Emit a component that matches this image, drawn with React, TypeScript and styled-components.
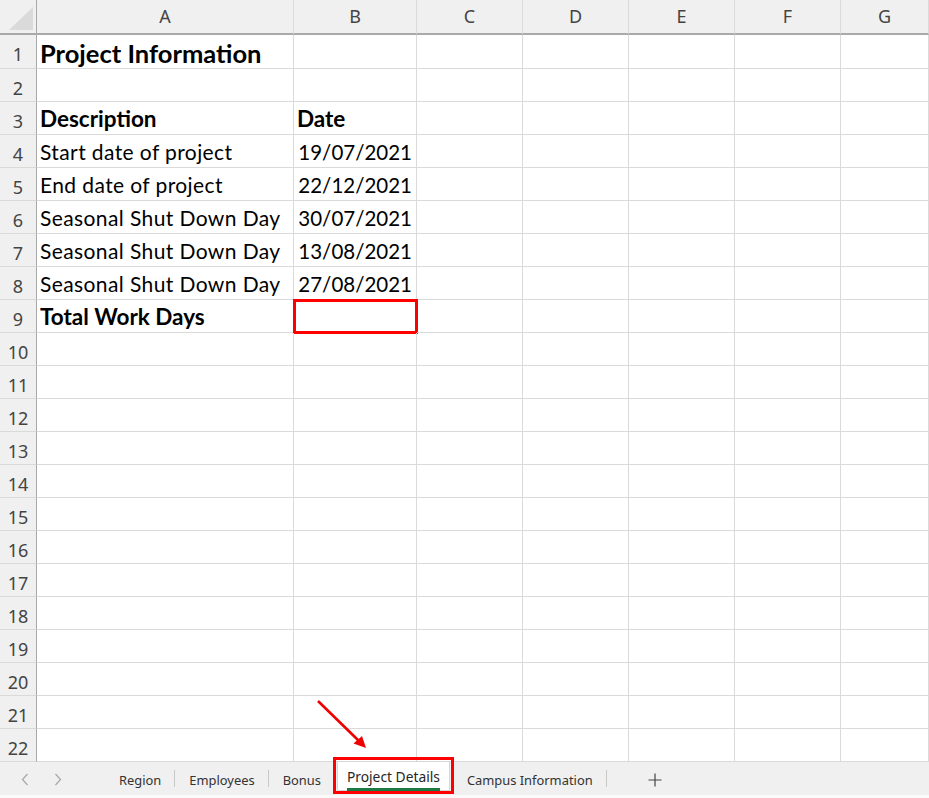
import React from "react";
import styled, { createGlobalStyle, css } from "styled-components";

const GlobalStyle = createGlobalStyle`
  html, body { margin: 0; padding: 0; background: #ffffff; }
  * { box-sizing: border-box; }
`;

const Page = styled.div`
  position: relative;
  width: 929px;
  height: 798px;
  overflow: hidden;
  display: flex;
  flex-direction: column;
  background: #ffffff;
`;

const Sheet = styled.div`
  display: grid;
  grid-template-columns: 37px 257px 123px 106px 106px 106px 106px 1fr;
  grid-template-rows: 35px 34px repeat(21, 33px);
  flex: none;
`;

const Corner = styled.div`
  background: #f0f0f0;
  border-right: 1px solid #a9a9a9;
  border-bottom: 2px solid #a9a9a9;
  display: flex;
  align-items: flex-end;
  justify-content: flex-end;
  padding: 0 3px 3px 0;
`;

const ColHeader = styled.div`
  background: #f0f0f0;
  border-right: 1px solid #dadada;
  border-bottom: 2px solid #a9a9a9;
  display: flex;
  align-items: center;
  justify-content: center;
  font-family: "Noto Sans", "Open Sans", sans-serif;
  font-size: 18px;
  color: #444444;
  padding-bottom: 1px;
`;

const RowHeader = styled.div`
  background: #f0f0f0;
  border-right: 1px solid #a9a9a9;
  border-bottom: 1px solid #dadada;
  display: flex;
  align-items: center;
  justify-content: center;
  font-family: "Noto Sans", "Open Sans", sans-serif;
  font-size: 18px;
  color: #444444;
  padding-top: 5px;
`;

const Cell = styled.div<{ $bold?: boolean; $title?: boolean; $right?: boolean; $selected?: boolean; $date?: boolean }>`
  border-right: 1px solid #dadada;
  border-bottom: 1px solid #dadada;
  display: flex;
  align-items: flex-end;
  justify-content: ${(p) => (p.$right ? "flex-end" : "flex-start")};
  padding: 0 ${(p) => (p.$right ? "4px" : "0")} 2px 3px;
  font-family: "Lato", "Liberation Sans", sans-serif;
  font-size: ${(p) => (p.$title ? "25.5px" : p.$bold ? "22.5px" : p.$date ? "20.5px" : "21px")};
  letter-spacing: ${(p) => (p.$bold || p.$title || p.$date ? "0" : "0.4px")};
  font-weight: ${(p) => (p.$bold || p.$title ? 700 : 400)};
  color: #000000;
  white-space: nowrap;
  line-height: 26px;
  ${(p) =>
    p.$selected &&
    css`
      outline: 3px solid #ff0000;
      outline-offset: -2px;
    `}
`;

const TabBar = styled.div`
  height: 33px;
  background: #f0f0f0;
  display: flex;
  align-items: stretch;
  flex: none;
`;

const BottomStrip = styled.div`
  flex: 1;
  background: #fafafa;
`;

const Nav = styled.div`
  width: 105px;
  display: flex;
  align-items: center;
  padding-left: 21px;
  gap: 25px;
  padding-top: 2px;
`;

const TabList = styled.div`
  display: flex;
  align-items: stretch;
`;

const Tab = styled.div<{ $active?: boolean }>`
  position: relative;
  display: flex;
  align-items: center;
  padding: 2px 13px 0 14px;
  font-family: "Noto Sans", "Open Sans", sans-serif;
  font-size: 12.9px;
  color: #333333;
  white-space: nowrap;
  ${(p) =>
    p.$active &&
    css`
      background: #ffffff;
      height: 28px;
      padding: 0 9px;
      margin: 0 4px 0 4px;
      box-shadow: 0 0 0 1px #d6d6d6;
      color: #262626;
      font-size: 13.8px;
      &::after {
        content: "";
        position: absolute;
        top: -5px;
        left: -5px;
        right: -5px;
        bottom: -4px;
        border: 3px solid #ff0000;
        pointer-events: none;
      }
    `}
`;

const TabLabel = styled.span<{ $active?: boolean }>`
  position: relative;
  ${(p) =>
    p.$active &&
    css`
      &::after {
        content: "";
        position: absolute;
        left: 0;
        right: 0;
        bottom: -5px;
        height: 3px;
        background: #1d7a45;
      }
    `}
`;

const Sep = styled.div`
  width: 1px;
  background: #c8c8c8;
  margin: 8px 0 8px;
`;

const AddBtn = styled.div`
  display: flex;
  align-items: center;
  padding-left: 41px;
  padding-top: 2px;
`;

const ArrowOverlay = styled.svg`
  position: absolute;
  left: 0;
  top: 0;
  pointer-events: none;
`;

const cols = ["A", "B", "C", "D", "E", "F", "G"];

type Row = { a?: string; b?: string; bold?: boolean; title?: boolean; selB?: boolean };

const rows: Row[] = [
  { a: "Project Information", title: true },
  {},
  { a: "Description", b: "Date", bold: true },
  { a: "Start date of project", b: "19/07/2021" },
  { a: "End date of project", b: "22/12/2021" },
  { a: "Seasonal Shut Down Day", b: "30/07/2021" },
  { a: "Seasonal Shut Down Day", b: "13/08/2021" },
  { a: "Seasonal Shut Down Day", b: "27/08/2021" },
  { a: "Total Work Days", bold: true, selB: true },
  ...Array.from({ length: 13 }, () => ({})),
];

const tabs = ["Region", "Employees", "Bonus", "Project Details", "Campus Information"];

const Chevron = ({ dir }: { dir: "left" | "right" }) => (
  <svg width="8" height="13" viewBox="0 0 8 13">
    <path
      d={dir === "left" ? "M6.5 1 L1.5 6.5 L6.5 12" : "M1.5 1 L6.5 6.5 L1.5 12"}
      fill="none"
      stroke="#a6a6a6"
      strokeWidth="1.2"
    />
  </svg>
);

export default function App() {
  return (
    <Page>
      <GlobalStyle />
      <Sheet>
        <Corner>
          <svg width="24" height="23" viewBox="0 0 24 23">
            <polygon points="0,23 24,0 24,23" fill="#dadada" />
          </svg>
        </Corner>
        {cols.map((c) => (
          <ColHeader key={c}>{c}</ColHeader>
        ))}
        {rows.map((r, i) => (
          <React.Fragment key={i}>
            <RowHeader>{i + 1}</RowHeader>
            <Cell $bold={r.bold} $title={r.title}>
              {r.a}
            </Cell>
            <Cell $bold={r.bold} $date={!r.bold && !!r.b} $right={!r.bold && !!r.b} $selected={r.selB}>
              {r.b}
            </Cell>
            {cols.slice(2).map((c) => (
              <Cell key={c} />
            ))}
          </React.Fragment>
        ))}
      </Sheet>
      <TabBar>
        <Nav>
          <Chevron dir="left" />
          <Chevron dir="right" />
        </Nav>
        <TabList>
          {tabs.map((t, i) => {
            const active = t === "Project Details";
            const prevActive = tabs[i - 1] === "Project Details";
            return (
              <React.Fragment key={t}>
                {i > 0 && !active && !prevActive && <Sep />}
                <Tab $active={active}>
                  <TabLabel $active={active}>{t}</TabLabel>
                </Tab>
              </React.Fragment>
            );
          })}
          <Sep />
        </TabList>
        <AddBtn>
          <svg width="14" height="14" viewBox="0 0 14 14">
            <path d="M7 0.5 V13.5 M0.5 7 H13.5" stroke="#444444" strokeWidth="1.2" />
          </svg>
        </AddBtn>
      </TabBar>
      <BottomStrip />
      <ArrowOverlay width="929" height="798" viewBox="0 0 929 798">
        <line x1="318" y1="701" x2="360" y2="742" stroke="#ee0000" strokeWidth="2.6" />
        <polygon points="366,748 353.5,743.5 362,736" fill="#ee0000" />
      </ArrowOverlay>
    </Page>
  );
}
